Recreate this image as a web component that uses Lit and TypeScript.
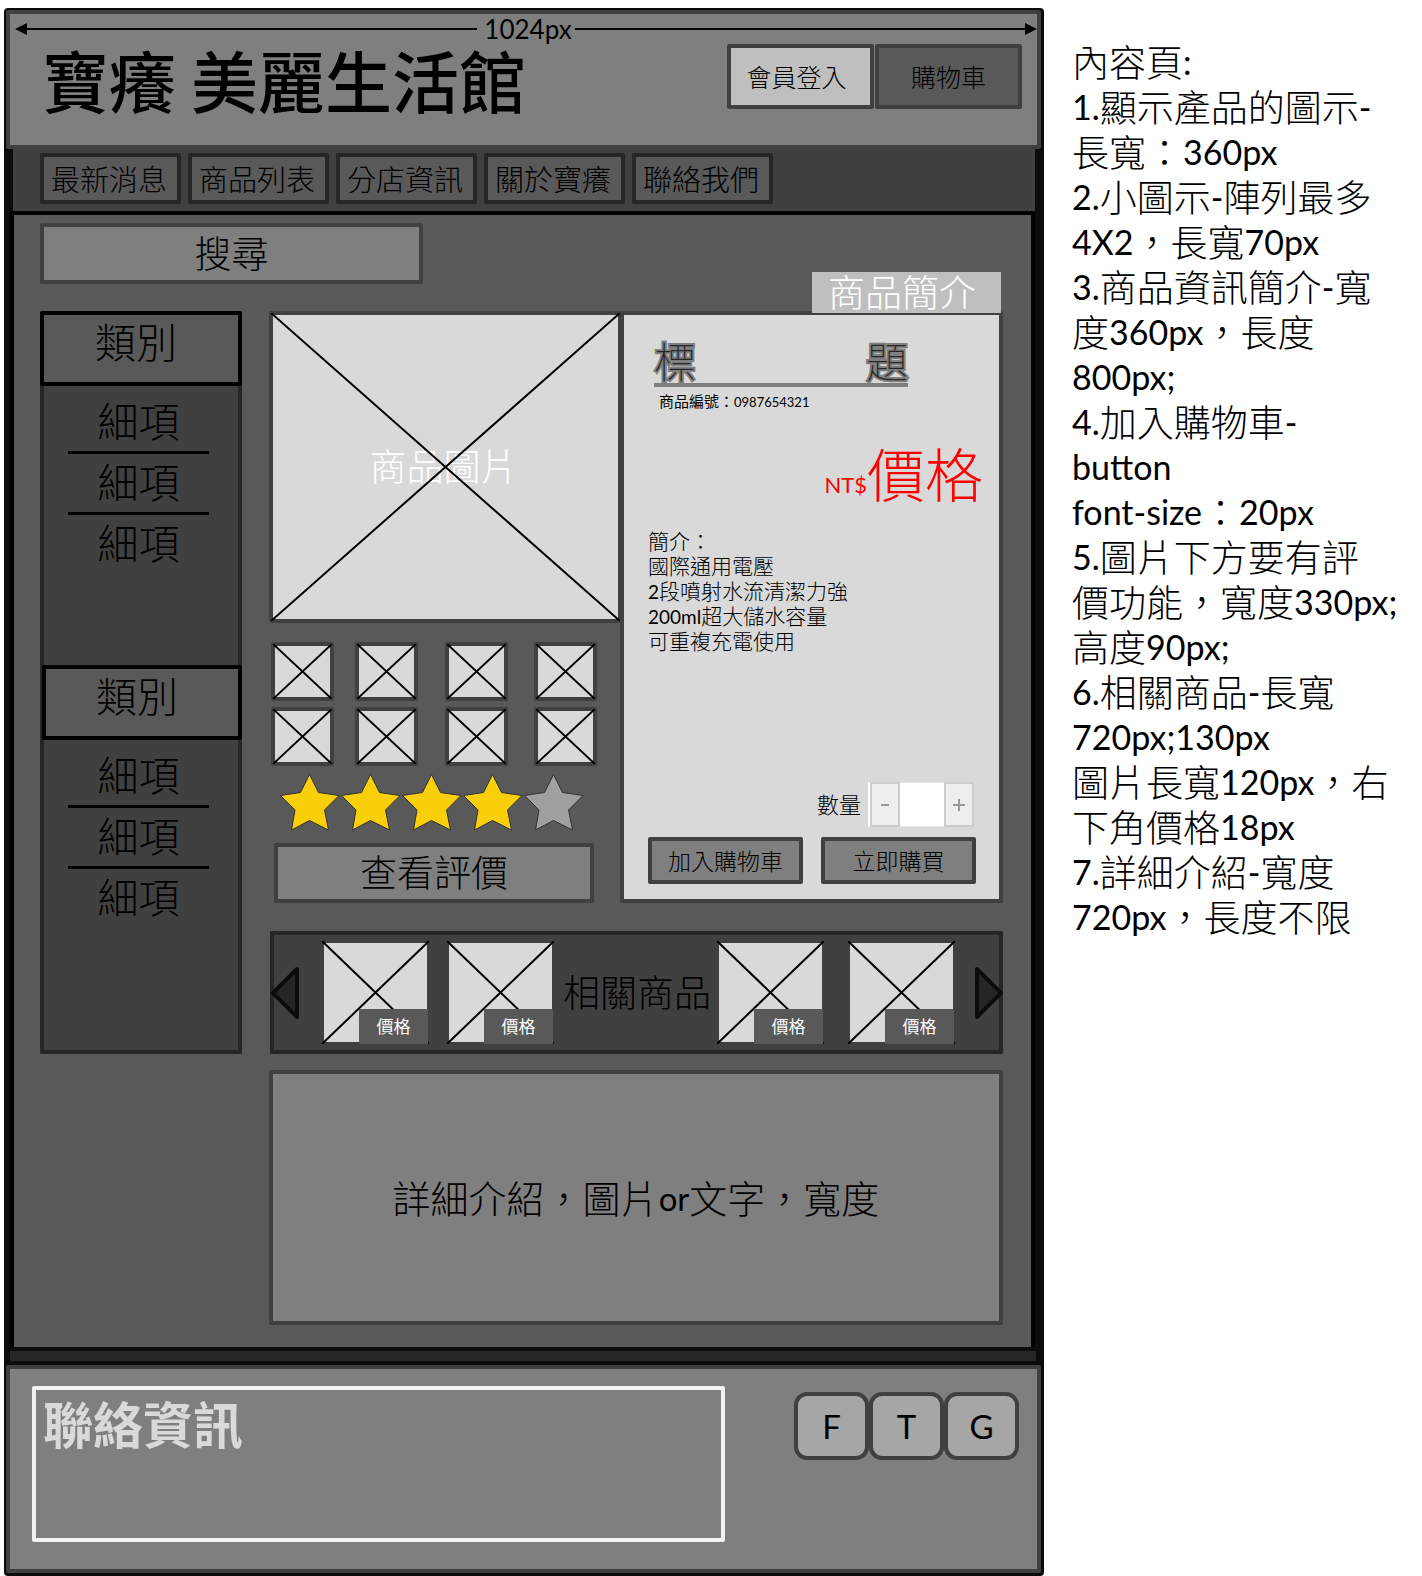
import { LitElement, html, css, svg } from "lit";
import { customElement, property, state } from "lit/decorators.js";

const NAV = ["最新消息", "商品列表", "分店資訊", "關於寶癢", "聯絡我們"];
const CATEGORIES = [
  { name: "類別", items: ["細項", "細項", "細項"] },
  { name: "類別", items: ["細項", "細項", "細項"] },
];
const INTRO = ["簡介：", "國際通用電壓", "2段噴射水流清潔力強", "200ml超大儲水容量", "可重複充電使用"];
const NOTES = [
  "內容頁:",
  "1.顯示產品的圖示-",
  "長寬：360px",
  "2.小圖示-陣列最多",
  "4X2，長寬70px",
  "3.商品資訊簡介-寬",
  "度360px，長度",
  "800px;",
  "4.加入購物車-",
  "button",
  "font-size：20px",
  "5.圖片下方要有評",
  "價功能，寬度330px;",
  "高度90px;",
  "6.相關商品-長寬",
  "720px;130px",
  "圖片長寬120px，右",
  "下角價格18px",
  "7.詳細介紹-寬度",
  "720px，長度不限",
];

/* Latin runs are set a little smaller than the Chinese text around them. */
const mixed = (text: string) =>
  text
    .split(/([\x20-\x7e]+)/)
    .filter(Boolean)
    .map((run) => (/^[\x20-\x7e]/.test(run) ? html`<span class="latin">${run}</span>` : run));

const shared = css`
  :host {
    display: block;
    box-sizing: border-box;
    font-family: "Lato", "Noto Sans CJK TC", sans-serif;
    font-weight: 300;
    color: #000;
  }
  *,
  *::before,
  *::after {
    box-sizing: border-box;
  }
  button,
  input {
    font: inherit;
    color: inherit;
    margin: 0;
    padding: 0;
    border-radius: 2px;
  }
  a {
    color: inherit;
    text-decoration: none;
  }
  h1,
  h2,
  p,
  ul {
    margin: 0;
    padding: 0;
    font-weight: inherit;
    list-style: none;
  }
  .latin {
    font-weight: 400;
    font-size: var(--latin, 34px);
    line-height: 1;
    vertical-align: var(--rise, 0);
  }
`;

@customElement("crossed-box")
export class CrossedBox extends LitElement {
  static styles = css`
    :host {
      display: block;
      box-sizing: border-box;
      position: relative;
      background: #d9d9d9;
    }
    .cross {
      display: block;
      position: absolute;
      inset: -2px;
      width: calc(100% + 4px);
      height: calc(100% + 4px);
    }
  `;
  render() {
    return html`<slot></slot>
      <svg class="cross" viewBox="0 0 100 100" preserveAspectRatio="none" aria-hidden="true">
        <path d="M0 0L100 100M100 0L0 100" fill="none" stroke="#000" stroke-width="2" vector-effect="non-scaling-stroke" />
      </svg>`;
  }
}

@customElement("side-menu")
export class SideMenu extends LitElement {
  static styles = [
    shared,
    css`
      :host {
        min-height: 743px;
        background: #404040;
        box-shadow: inset 0 0 0 4px #262626;
        border-radius: 2px;
        font-size: 41px;
        text-align: center;
      }
      .group {
        min-height: 354px;
      }
      .name {
        height: 75px;
        padding-right: 10px;
        border: 4px solid #000;
        border-radius: 2px;
        background: #595959;
        font-size: 41px;
        line-height: 55px;
      }
      .group + .group .name {
        margin-left: 2px;
      }
      .items {
        padding: 7px 33px 0 28px;
      }
      .item {
        height: 61px;
        line-height: 58px;
        border-bottom: 3px solid #000;
      }
      .item:last-child {
        border-bottom: 0;
      }
      .link {
        display: block;
      }
    `,
  ];
  render() {
    return CATEGORIES.map(
      (group) => html`<section class="group">
        <h2 class="name">${group.name}</h2>
        <ul class="items">
          ${group.items.map((item) => html`<li class="item"><a class="link" href="#">${item}</a></li>`)}
        </ul>
      </section>`
    );
  }
}

@customElement("star-rating")
export class StarRating extends LitElement {
  @property({ type: Number }) value = 4;
  static styles = css`
    :host {
      display: flex;
      gap: 1px;
    }
    .star {
      display: block;
      width: 60px;
      height: 58px;
      fill: #a0a0a0;
      stroke: #333;
    }
    .on {
      fill: #f9cf0a;
    }
  `;
  render() {
    return [1, 2, 3, 4, 5].map(
      (n) => svg`<svg class=${n <= this.value ? "star on" : "star"} viewBox="0 0 60 58" aria-hidden="true">
        <path d="M29.5 1.5L38.5 19.5L59 22.5L44.5 37L48.5 57L29.5 47.5L11.5 57L15 37L.5 22.5L20.5 19.5Z" />
      </svg>`
    );
  }
}

@customElement("product-gallery")
export class ProductGallery extends LitElement {
  static styles = [
    shared,
    css`
      .frame {
        border: 4px solid #404040;
        border-radius: 2px;
      }
      .photo {
        height: 312px;
        margin-right: -2px;
        padding-right: 4px;
        text-align: center;
        font-size: 37px;
        line-height: 304px;
        color: #fff;
      }
      .thumbs {
        display: grid;
        grid-template-columns: 84px 90px 89px 63px;
        row-gap: 6px;
        padding: 19px 0 7px 2px;
      }
      .thumb {
        width: 63px;
        height: 59px;
      }
      .stars {
        padding-left: 11px;
      }
      .reviews {
        display: block;
        width: calc(100% - 31px);
        height: 60px;
        margin: 12px 0 0 5px;
        background: #7f7f7f;
        font-size: 37px;
        line-height: 48px;
      }
    `,
  ];
  render() {
    return html`<crossed-box class="frame photo">商品圖片</crossed-box>
      <div class="thumbs">${Array.from({ length: 8 }, () => html`<crossed-box class="frame thumb"></crossed-box>`)}</div>
      <star-rating class="stars" role="img" aria-label="4 / 5" .value=${4}></star-rating>
      <button class="frame reviews" type="button">查看評價</button>`;
  }
}

@customElement("product-panel")
export class ProductPanel extends LitElement {
  @state() private quantity = "";
  static styles = [
    shared,
    css`
      :host {
        position: relative;
        display: flex;
        flex-direction: column;
        min-height: 592px;
        padding: 20px 23px 15px 24px;
        background: #d9d9d9;
        border: 4px solid #404040;
        border-radius: 2px;
      }
      .tag {
        position: absolute;
        right: -2px;
        top: -43px;
        width: 189px;
        height: 41px;
        padding-right: 9px;
        background: #bfbfbf;
        color: #fff;
        font-size: 37px;
        line-height: 42px;
        text-align: center;
      }
      .title {
        display: flex;
        justify-content: space-between;
        width: 254px;
        height: 52px;
        margin-left: 6px;
        border-bottom: 4px solid #7f7f7f;
        font-size: 42px;
        font-weight: 100;
        line-height: 54px;
        color: #262626;
        -webkit-text-stroke: 4px #7f7f7f;
        paint-order: stroke fill;
      }
      .number {
        --latin: 13px;
        margin: 4px 0 0 11px;
        font-size: 15px;
        font-weight: 400;
        line-height: 20px;
      }
      .price {
        --latin: 22px;
        --rise: 4px;
        height: 60px;
        margin: 31px -7px 26px 0;
        font-size: 58px;
        line-height: 66px;
        text-align: right;
        color: #f00;
      }
      .intro {
        --latin: 19px;
        flex: 1;
        font-size: 21px;
        line-height: 25px;
      }
      .quantity {
        display: flex;
        justify-content: flex-end;
        align-items: center;
        gap: 7px;
        padding-right: 2px;
        font-size: 22px;
        line-height: 40px;
      }
      .stepper {
        display: flex;
        width: 106px;
        height: 45px;
        padding-left: 2px;
        background: #fff;
      }
      .step {
        width: 30px;
        border: 2px solid #ccc;
        border-radius: 0;
        background: #eee;
        line-height: 0;
      }
      .count {
        flex: 1;
        min-width: 0;
        border: solid #e4e4e4;
        border-width: 1px 0;
        border-radius: 0;
        background: #fff;
        text-align: center;
      }
      .actions {
        display: flex;
        gap: 18px;
        margin-top: 10px;
      }
      .action {
        flex: 1;
        height: 47px;
        border: 4px solid #404040;
        background: #7f7f7f;
        font-size: 23px;
        line-height: 36px;
      }
    `,
  ];
  private step(by: number) {
    this.quantity = String(Math.max(0, Number(this.quantity) + by));
  }
  render() {
    return html`<div class="tag">商品簡介</div>
      <h2 class="title"><span>標</span><span>題</span></h2>
      <p class="number">${mixed("商品編號：0987654321")}</p>
      <p class="price">${mixed("NT$價格")}</p>
      <div class="intro">${INTRO.map((line) => html`<p>${mixed(line)}</p>`)}</div>
      <div class="quantity">
        <label for="count">數量</label>
        <div class="stepper">
          <button class="step" type="button" aria-label="-" @click=${() => this.step(-1)}>
            <svg width="10" height="12" viewBox="0 0 10 12"><path d="M1 6H9" stroke="#999" stroke-width="2" /></svg>
          </button>
          <input class="count" id="count" type="text" inputmode="numeric" .value=${this.quantity} />
          <button class="step" type="button" aria-label="+" @click=${() => this.step(1)}>
            <svg width="12" height="12" viewBox="0 0 12 12"><path d="M0 6H12M6 0V12" stroke="#999" stroke-width="2" /></svg>
          </button>
        </div>
      </div>
      <div class="actions">
        <button class="action" type="button">加入購物車</button>
        <button class="action" type="button">立即購買</button>
      </div>`;
  }
}

@customElement("related-products")
export class RelatedProducts extends LitElement {
  static styles = [
    shared,
    css`
      :host {
        display: grid;
        grid-template-columns: 54px 125px 114px 1fr 131px 127px 26px;
        align-items: center;
        min-height: 123px;
        margin-left: 1px;
        background: #404040;
        box-shadow: inset 0 0 0 4px #262626;
        border-radius: 2px;
      }
      .arrow {
        width: 29px;
        height: 54px;
        border: 0;
        background: none;
      }
      .next {
        justify-self: end;
      }
      .shape {
        display: block;
        fill: #262626;
        stroke: #0c0c0c;
        stroke-width: 4;
        stroke-linejoin: round;
      }
      .tile {
        position: relative;
        width: 103px;
        height: 99px;
      }
      .image {
        height: 100%;
      }
      .price {
        position: absolute;
        right: -1px;
        bottom: -2px;
        width: 69px;
        height: 35px;
        background: #595959;
        color: #fff;
        font-size: 17px;
        font-weight: 400;
        line-height: 36px;
        text-align: center;
      }
      .heading {
        font-size: 37px;
        line-height: 42px;
        white-space: nowrap;
      }
    `,
  ];
  private tile() {
    return html`<a class="tile" href="#"><crossed-box class="image"></crossed-box><span class="price">價格</span></a>`;
  }
  render() {
    return html`<button class="arrow" type="button" aria-label="◀">
        <svg class="shape" width="29" height="54" viewBox="0 0 29 54"><path d="M27 3V51L3 27Z" /></svg>
      </button>
      ${this.tile()} ${this.tile()}
      <h2 class="heading">相關商品</h2>
      ${this.tile()} ${this.tile()}
      <button class="arrow next" type="button" aria-label="▶">
        <svg class="shape" width="29" height="54" viewBox="0 0 29 54"><path d="M3 3V51L27 27Z" /></svg>
      </button>`;
  }
}

@customElement("app-root")
export class AppRoot extends LitElement {
  static styles = [
    shared,
    css`
      :host {
        display: grid;
        grid-template-columns: minmax(0, 1fr) 350px;
        gap: 28px;
        padding: 8px 0 0 4px;
        background: #fff;
      }
      .frame {
        padding: 2px 3px 3px 2px;
        background: #0c0c0c;
        border-radius: 4px;
      }
      .header {
        min-height: 139px;
        background: #7f7f7f;
        border: 4px solid #404040;
        border-radius: 2px;
      }
      .ruler {
        --latin: 26px;
        display: flex;
        align-items: center;
        height: 30px;
        padding-left: 5px;
      }
      .rule {
        flex: 1;
        height: 2px;
        background: #000;
      }
      .head {
        display: block;
        width: 12px;
        height: 12px;
      }
      .size {
        padding: 0 3px 0 7px;
      }
      .top {
        display: flex;
        justify-content: space-between;
        align-items: flex-start;
        padding: 0 15px 0 32px;
      }
      .brand {
        font-family: "Noto Sans CJK TC", sans-serif;
        font-size: 67px;
        font-weight: 500;
        line-height: 69px;
        white-space: nowrap;
      }
      .account {
        display: flex;
        gap: 1px;
      }
      .account-button {
        width: 147px;
        height: 65px;
        border: 4px solid #404040;
        background: #595959;
        font-size: 25px;
        line-height: 54px;
      }
      .login {
        background: #bfbfbf;
        padding-right: 8px;
      }
      .nav {
        display: flex;
        gap: 7px;
        height: 62px;
        margin: 0 6px 0 7px;
        padding: 4px 27px 0;
        background: #404040;
      }
      .nav-link {
        width: 141px;
        height: 51px;
        border: 4px solid #262626;
        border-radius: 2px;
        background: #595959;
        font-size: 29px;
        line-height: 45px;
        text-align: center;
        padding-right: 3px;
      }
      .main {
        margin: 0 6px 0 4px;
        padding: 8px 28px 22px 26px;
        border: 4px solid #000;
        border-bottom: 0;
        background: #595959;
      }
      .search {
        display: block;
        width: 383px;
        height: 61px;
        border: 4px solid #404040;
        background: #7f7f7f;
        font-size: 37px;
        text-align: center;
      }
      .search::placeholder {
        color: #000;
        opacity: 1;
      }
      .body {
        display: grid;
        grid-template-columns: 202px minmax(0, 1fr);
        align-items: start;
        gap: 27px;
        margin-top: 27px;
      }
      .product {
        display: grid;
        grid-template-columns: minmax(0, 351fr) minmax(0, 383fr);
        margin-bottom: 28px;
      }
      .detail {
        --latin: 33px;
        --rise: 2px;
        display: flex;
        align-items: center;
        justify-content: center;
        min-height: 255px;
        margin-top: 16px;
        border: 4px solid #404040;
        border-radius: 2px;
        background: #7f7f7f;
        font-size: 38px;
        line-height: 46px;
      }
      .band {
        height: 18px;
        margin: 0 5px 0 4px;
        border: solid #0c0c0c;
        border-width: 4px 0;
        background: #262626;
      }
      .footer {
        display: flex;
        justify-content: space-between;
        align-items: flex-start;
        min-height: 208px;
        padding: 17px 18px 27px 22px;
        border: 4px solid #404040;
        border-radius: 2px;
        background: #7f7f7f;
      }
      .contact {
        flex: 1;
        height: 156px;
        margin-right: 69px;
        padding: 4px 7px;
        border: 4px solid #f2f2f2;
        border-radius: 2px;
        color: #d9d9d9;
      }
      .contact-title {
        font-size: 50px;
        font-weight: 700;
        line-height: 62px;
      }
      .social {
        display: flex;
        padding-top: 6px;
      }
      .social-link {
        width: 75px;
        height: 68px;
        border: 4px solid #404040;
        border-radius: 13px;
        background: #a6a6a6;
        font-size: 33px;
        font-weight: 400;
        line-height: 60px;
        text-align: center;
      }
      .notes {
        --rise: 2px;
        padding-top: 32px;
        font-size: 37px;
        line-height: 45px;
        white-space: nowrap;
      }
      .note {
        height: 45px;
      }
    `,
  ];
  render() {
    return html`<div class="frame">
        <header class="header">
          <div class="ruler">
            <svg class="head" viewBox="0 0 12 12" aria-hidden="true"><path d="M0 6L12 0V12Z" /></svg>
            <span class="rule"></span>
            <span class="size latin">1024px</span>
            <span class="rule"></span>
            <svg class="head" viewBox="0 0 12 12" aria-hidden="true"><path d="M12 6L0 0V12Z" /></svg>
          </div>
          <div class="top">
            <h1 class="brand">寶癢 美麗生活館</h1>
            <div class="account">
              <button class="account-button login" type="button">會員登入</button>
              <button class="account-button" type="button">購物車</button>
            </div>
          </div>
        </header>
        <nav class="nav">${NAV.map((item) => html`<a class="nav-link" href="#">${item}</a>`)}</nav>
        <main class="main">
          <input class="search" type="text" placeholder="搜尋" aria-label="搜尋" />
          <div class="body">
            <side-menu></side-menu>
            <div class="content">
              <div class="product">
                <product-gallery></product-gallery>
                <product-panel></product-panel>
              </div>
              <related-products></related-products>
              <section class="detail"><p>${mixed("詳細介紹，圖片or文字，寬度")}</p></section>
            </div>
          </div>
        </main>
        <div class="band"></div>
        <footer class="footer">
          <section class="contact"><h2 class="contact-title">聯絡資訊</h2></section>
          <div class="social">${["F", "T", "G"].map((name) => html`<a class="social-link" href="#">${name}</a>`)}</div>
        </footer>
      </div>
      <aside class="notes">${NOTES.map((line) => html`<p class="note">${mixed(line)}</p>`)}</aside>`;
  }
}
